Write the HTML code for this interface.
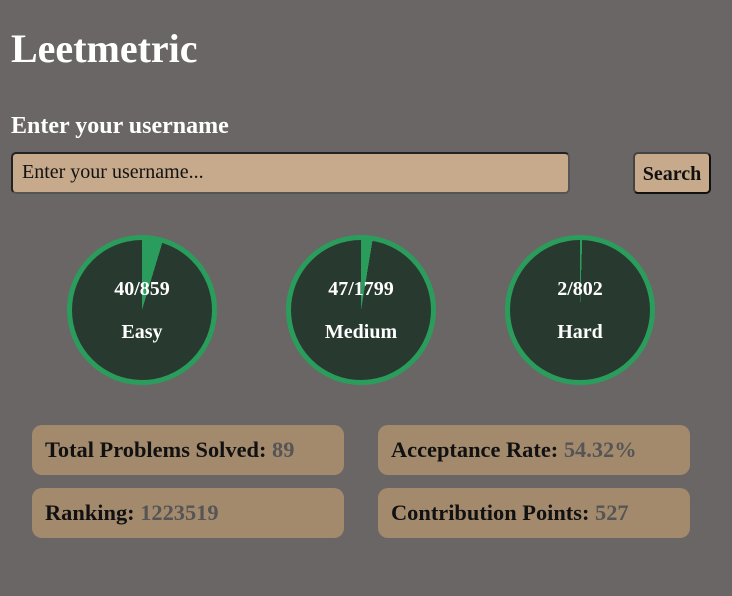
<!DOCTYPE html>
<html><head><style>
body{margin:0;width:732px;height:596px;background:#6b6666;font-family:"Liberation Serif",serif;position:relative;overflow:hidden}
h1{position:absolute;left:11px;top:26px;margin:0;font-size:40px;color:#fff;font-weight:bold;line-height:46px}
h2{position:absolute;left:11px;top:112px;margin:0;font-size:24px;color:#fff;font-weight:bold;line-height:28px}
.inp{position:absolute;left:11px;top:152px;background:#c6aa8b;border:2px solid #222;border-right-color:#555;border-bottom-color:#555;border-radius:5px;width:555px;height:38px}
.inp span{position:absolute;left:9px;top:7px;font-size:20px;color:#111}
.btn{position:absolute;left:633px;top:152px;width:74px;height:38px;background:#c6aa8b;border:2px solid #111;border-left-color:#444;border-top-color:#444;border-radius:5px;font-weight:bold;font-size:20px;text-align:center;line-height:40px;color:#111}
.c{position:absolute;top:235px;width:140px;height:140px;border:5px solid #2a9d5c;border-radius:50%;color:#fff;font-weight:bold;font-size:20px;text-align:center}
.c .a{position:absolute;top:38px;width:100%}
.c .b{position:absolute;top:81px;width:100%}
.card{position:absolute;width:312px;height:50px;background:#a38a6d;border-radius:10px;font-size:22.4px;font-weight:bold;color:#111;line-height:50px;box-sizing:border-box;padding-left:13px}
.card b{color:#555}
</style></head><body>
<h1>Leetmetric</h1>
<h2>Enter your username</h2>
<div class="inp"><span>Enter your username...</span></div>
<div class="btn">Search</div>
<div class="c" style="left:67px;background:conic-gradient(#2a9d5c 0 4.66%,#283a2f 4.66% 100%)"><div class="a">40/859</div><div class="b">Easy</div></div>
<div class="c" style="left:286px;background:conic-gradient(#2a9d5c 0 2.61%,#283a2f 2.61% 100%)"><div class="a">47/1799</div><div class="b">Medium</div></div>
<div class="c" style="left:505px;background:conic-gradient(#2a9d5c 0 0.5%,#283a2f 0.5% 100%)"><div class="a">2/802</div><div class="b">Hard</div></div>
<div class="card" style="left:32px;top:425px">Total Problems Solved: <b>89</b></div>
<div class="card" style="left:378px;top:425px">Acceptance Rate: <b>54.32%</b></div>
<div class="card" style="left:32px;top:488px">Ranking: <b>1223519</b></div>
<div class="card" style="left:378px;top:488px">Contribution Points: <b>527</b></div>
</body></html>
